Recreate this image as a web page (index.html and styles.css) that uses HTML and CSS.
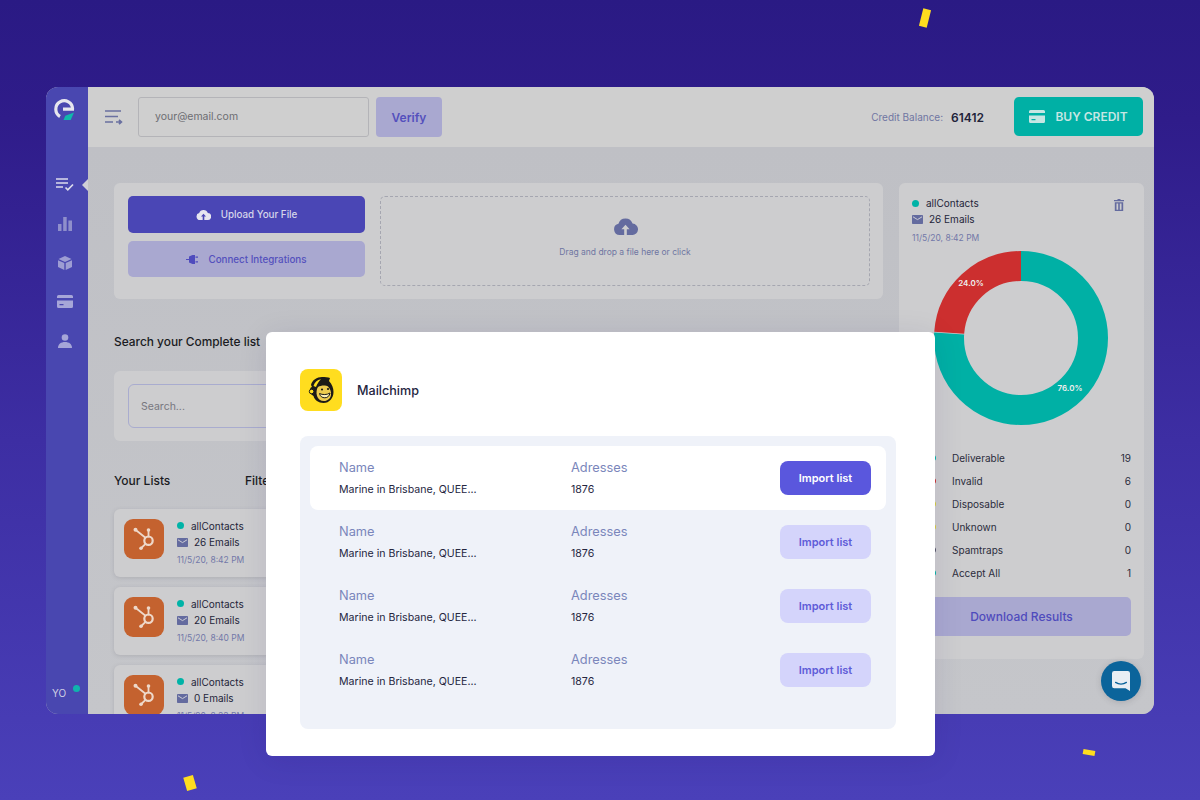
FILE: index.html
```html
<!DOCTYPE html>
<html lang="en">
<head>
  <meta charset="UTF-8" />
  <meta name="viewport" content="width=device-width, initial-scale=1.0" />
  <title>Email Verifier - Import list</title>
  <link rel="stylesheet" href="styles.css">
</head>
<body>
  <svg class="defs" width="0" height="0">
    <symbol id="i-mail" viewBox="0 0 11 9">
      <rect width="11" height="9" rx="0.8" fill="#646b9f"/>
      <path d="M1 1.8l4.5 2.8L10 1.8" fill="none" stroke="#cdcdd6" stroke-width="1"/>
    </symbol>
    <symbol id="i-hub" viewBox="0 0 40 40">
      <g fill="none" stroke="#eed8c9" stroke-width="1.8" stroke-linecap="round">
        <circle cx="24.5" cy="21.7" r="4.2" stroke-width="2.2"/>
        <path d="M24.5 17.5V11.5M21.5 18.8L11.8 11M21.5 24.8L17.3 29"/>
      </g>
      <g fill="#eed8c9">
        <circle cx="24.5" cy="11" r="1.8"/>
        <circle cx="11.5" cy="10.7" r="2"/>
        <circle cx="17" cy="29.2" r="1.8"/>
      </g>
    </symbol>
    <symbol id="i-card" viewBox="0 0 16 13">
      <path d="M1.5 0h13A1.5 1.5 0 0 1 16 1.5V3H0V1.500A1.500 1.500 0 0 1 1.500 0zM0 5.500h16v6A1.500 1.500 0 0 1 14.500 13h-13A1.500 1.500 0 0 1 0 11.500zM2.500 9v1.300h4V9z" fill="currentColor" fill-rule="evenodd"/>
    </symbol>
  </svg>

  <div class="confetti confetti-a"></div>
  <div class="confetti confetti-b"></div>
  <div class="confetti confetti-c"></div>

  <div class="app">
    <div class="sidebar">
      <svg class="logo" width="21" height="22" viewBox="0 0 21 22">
        <path d="M9 10.200H20M18.600 10.200A8.400 8.400 0 1 0 6 17.500" fill="none" stroke="#e6e6ee" stroke-width="3.200"/>
        <path d="M9.500 21l1.800-4.300 8.700-3.200-3.300 7.500z" fill="#10b8ab"/>
      </svg>
      <div class="side-item side-active">
        <svg width="18" height="13" viewBox="0 0 18 13"><path d="M0 1h12M0 5h12M0 9h7M9.500 9.500l2.300 2.300L17 6.500" fill="none" stroke="#dcdcec" stroke-width="1.700"/></svg>
      </div>
      <div class="side-item">
        <svg width="14" height="14" viewBox="0 0 14 14"><path d="M0 7h3.500v7H0zM5.200 0h3.500v14H5.200zM10.400 3.500H14V14h-3.600z" fill="#8f8fcb"/></svg>
      </div>
      <div class="side-item">
        <svg width="14" height="14" viewBox="0 0 14 14"><path d="M7 0l6.500 3L7 6 .5 3zM0 4.200l6.300 2.900V14L0 11zM14 4.200L7.700 7.100V14l6.300-3z" fill="#9d9dd3"/></svg>
      </div>
      <div class="side-item side-card"><svg width="16" height="13"><use href="#i-card"/></svg></div>
      <div class="side-item">
        <svg width="14" height="14" viewBox="0 0 14 14"><circle cx="7" cy="3.500" r="3.300" fill="#a6a6d8"/><path d="M0 14c0-4 3-6 7-6s7 2 7 6z" fill="#a6a6d8"/></svg>
      </div>
      <div class="side-user"><span>YO</span><i class="side-dot"></i></div>
    </div>

    <div class="content">
      <div class="topbar">
        <svg class="top-menu" width="18" height="15" viewBox="0 0 18 15"><path d="M0 1h16M0 6.500h13M0 12h8M11 12h5M14 9.800l2.400 2.200-2.400 2.200" fill="none" stroke="#6a70a0" stroke-width="1.700"/></svg>
        <div class="top-input">your@email.com</div>
        <button class="btn-verify">Verify</button>
        <div class="credit">
          <span class="credit-label">Credit Balance:</span>
          <span class="credit-value">61412</span>
        </div>
        <button class="btn-buy"><svg width="16" height="13"><use href="#i-card"/></svg>BUY CREDIT</button>
      </div>

      <div class="main">
        <div class="left-col">
          <div class="panel upload-panel">
            <div class="upload-btns">
              <button class="btn-upload">
                <svg width="15" height="11" viewBox="0 0 15 11"><path d="M4 11a3.500 3.500 0 0 1-.8-6.900A4.500 4.500 0 0 1 11.800 4 3.500 3.500 0 0 1 11.500 11H8.300V7.500h1.700L7.500 4.700 5 7.500h1.700V11z" fill="#e6e6f0"/></svg>
                Upload Your File
              </button>
              <button class="btn-connect">
                <svg width="12" height="11" viewBox="0 0 12 11"><path d="M0 5h3V2.500L6.500 1h2.500v9H6.500L3 8.500V6H0zM9.500 2.500H12v1.200H9.500zM9.500 7.300H12v1.200H9.500z" fill="#4f4bbd"/></svg>
                Connect Integrations
              </button>
            </div>
            <div class="dropzone">
              <svg width="25" height="18" viewBox="0 0 15 11"><path d="M4 11a3.500 3.500 0 0 1-.8-6.900A4.500 4.500 0 0 1 11.800 4 3.500 3.500 0 0 1 11.500 11H8.300V7.500h1.700L7.500 4.700 5 7.500h1.700V11z" fill="#646b9f"/></svg>
              <span>Drag and drop a file here or click</span>
            </div>
          </div>

          <h3 class="search-title">Search your Complete list</h3>
          <div class="panel search-panel">
            <div class="search-input">Search...</div>
          </div>

          <div class="lists-head">
            <span class="lists-title">Your Lists</span>
            <span class="lists-filter">Filter</span>
          </div>

          <div class="list-card">
            <svg class="hub" width="40" height="40"><use href="#i-hub"/></svg>
            <div class="list-info">
              <div class="list-name"><i class="dot-teal"></i>allContacts</div>
              <div class="list-mails"><svg width="11" height="9"><use href="#i-mail"/></svg>26 Emails</div>
              <div class="list-date">11/5/20, 8:42 PM</div>
            </div>
          </div>
          <div class="list-card">
            <svg class="hub" width="40" height="40"><use href="#i-hub"/></svg>
            <div class="list-info">
              <div class="list-name"><i class="dot-teal"></i>allContacts</div>
              <div class="list-mails"><svg width="11" height="9"><use href="#i-mail"/></svg>20 Emails</div>
              <div class="list-date">11/5/20, 8:40 PM</div>
            </div>
          </div>
          <div class="list-card">
            <svg class="hub" width="40" height="40"><use href="#i-hub"/></svg>
            <div class="list-info">
              <div class="list-name"><i class="dot-teal"></i>allContacts</div>
              <div class="list-mails"><svg width="11" height="9"><use href="#i-mail"/></svg>0 Emails</div>
              <div class="list-date">11/5/20, 8:33 PM</div>
            </div>
          </div>
        </div>

        <div class="panel result-panel">
          <div class="result-head">
            <div class="list-info">
              <div class="list-name"><i class="dot-teal"></i>allContacts</div>
              <div class="list-mails"><svg width="11" height="9"><use href="#i-mail"/></svg>26 Emails</div>
              <div class="list-date">11/5/20, 8:42 PM</div>
            </div>
            <svg class="trash" width="10" height="12" viewBox="0 0 10 12"><path d="M3.500 0h3v1H10v1.300H0V1h3.500zM.8 3.200h8.400V12H.8zM2.500 4.500V10.700h1.700V4.500zM5.800 4.500V10.700h1.700V4.500z" fill="#646b9f" fill-rule="evenodd"/></svg>
          </div>

          <svg class="donut" width="176" height="176" viewBox="0 0 176 176">
            <g fill="none" stroke-width="30" transform="rotate(-90 88 88)">
              <circle cx="88" cy="88" r="72" stroke="#00b0a5" stroke-dasharray="343.300 452.390"/>
              <circle cx="88" cy="88" r="72" stroke="#cc2f2f" stroke-dasharray="108 452.390" stroke-dashoffset="-344.100"/>
            </g>
            <text class="donut-label" x="38" y="36">24.0%</text>
            <text class="donut-label" x="137" y="141">76.0%</text>
          </svg>

          <div class="legend">
            <div class="legend-row"><i class="dot dot-1"></i><span>Deliverable</span><b>19</b></div>
            <div class="legend-row"><i class="dot dot-2"></i><span>Invalid</span><b>6</b></div>
            <div class="legend-row"><i class="dot dot-3"></i><span>Disposable</span><b>0</b></div>
            <div class="legend-row"><i class="dot dot-3"></i><span>Unknown</span><b>0</b></div>
            <div class="legend-row"><i class="dot dot-4"></i><span>Spamtraps</span><b>0</b></div>
            <div class="legend-row"><i class="dot dot-1"></i><span>Accept All</span><b>1</b></div>
          </div>
          <button class="btn-download">Download Results</button>
        </div>
      </div>
    </div>

    <div class="chat">
      <svg width="18" height="20" viewBox="0 0 20 22"><path d="M2.500 0h15A2.500 2.500 0 0 1 20 2.500V22l-5-3H2.500A2.500 2.500 0 0 1 0 16.500v-14A2.500 2.500 0 0 1 2.500 0z" fill="#e8eef4"/><path d="M4 12.500c3.500 2.500 8.500 2.500 12 0" fill="none" stroke="#0b649b" stroke-width="1.500" stroke-linecap="round"/></svg>
    </div>
  </div>

  <div class="modal">
    <div class="modal-head">
      <div class="mc-logo">
        <svg width="26" height="28" viewBox="0 0 26 28">
          <path d="M3 9C4 4 9 1 14 1c3 0 6 0 8 1l-1 3c3 3 4.500 7 4.500 11 0 6-4 11-10 11-5 0-9-3-10-7-2-1-4-3-3.500-6C2 12 3 11 4 11z" fill="#1c1a17"/>
          <path d="M5.500 10C6.500 6.500 9 4 13 3.300c-2 2-4 4.500-5 7.700z" fill="#ffdd1f"/>
          <path d="M10 11c3-2 8-2 10-.5 2 2 3.500 5 3 8.500-.5 3.500-3.500 6-7 6-3.500 0-6-2-7-5-1-3-.5-7 1-9z" fill="#eecb4e"/>
          <circle cx="3.600" cy="15.500" r="2.300" fill="#ffdd1f" stroke="#1c1a17"/>
          <circle cx="14" cy="13.500" r="1.100" fill="#1c1a17"/>
          <circle cx="20" cy="13" r="1.100" fill="#1c1a17"/>
          <path d="M11.500 17.500c3 1.500 7.500 1.500 10.500-.5-.5 3-2.500 4.800-5.200 4.800s-4.700-1.500-5.300-4.300z" fill="#fff1b8" stroke="#1c1a17" stroke-width="1"/>
        </svg>
      </div>
      <span class="mc-name">Mailchimp</span>
    </div>
    <div class="import-list">
      <div class="import-row import-row-active">
        <div class="import-name"><span class="import-label">Name</span><span class="import-value">Marine in Brisbane, QUEE...</span></div>
        <div class="import-addr"><span class="import-label">Adresses</span><span class="import-value">1876</span></div>
        <button class="btn-import btn-import-active">Import list</button>
      </div>
      <div class="import-row">
        <div class="import-name"><span class="import-label">Name</span><span class="import-value">Marine in Brisbane, QUEE...</span></div>
        <div class="import-addr"><span class="import-label">Adresses</span><span class="import-value">1876</span></div>
        <button class="btn-import">Import list</button>
      </div>
      <div class="import-row">
        <div class="import-name"><span class="import-label">Name</span><span class="import-value">Marine in Brisbane, QUEE...</span></div>
        <div class="import-addr"><span class="import-label">Adresses</span><span class="import-value">1876</span></div>
        <button class="btn-import">Import list</button>
      </div>
      <div class="import-row">
        <div class="import-name"><span class="import-label">Name</span><span class="import-value">Marine in Brisbane, QUEE...</span></div>
        <div class="import-addr"><span class="import-label">Adresses</span><span class="import-value">1876</span></div>
        <button class="btn-import">Import list</button>
      </div>
    </div>
  </div>
</body>
</html>
```

FILE: styles.css
```css
* {
  box-sizing: border-box;
}

body {
  margin: 0;
  height: 800px;
  padding: 87px 46px 0;
  overflow: hidden;
  position: relative;
  font-family: Inter, 'Noto Sans', sans-serif;
  color: #1f2030;
  background: linear-gradient(to bottom, #2a1a84 0%, #2f1c8a 15%, #3d2ea3 55%, #4a40b9 100%);
}

button {
  font-family: inherit;
  border: none;
  cursor: pointer;
}

.defs {
  position: absolute;
}

.confetti {
  position: absolute;
  background: #ffdd1f;
}

.confetti-a {
  left: 921px;
  top: 9px;
  width: 8px;
  height: 18px;
  transform: rotate(14deg);
}

.confetti-b {
  left: 185px;
  top: 776px;
  width: 10px;
  height: 14px;
  transform: rotate(-16deg);
}

.confetti-c {
  left: 1083px;
  top: 750px;
  width: 12px;
  height: 5px;
  transform: rotate(10deg);
}

.app {
  position: relative;
  display: flex;
  height: 627px;
  border-radius: 12px;
  overflow: hidden;
  background: #c2c3c8;
}

.sidebar {
  width: 42px;
  flex-shrink: 0;
  display: flex;
  flex-direction: column;
  align-items: center;
  background: #4947b0;
  padding-top: 12px;
  position: relative;
}

.logo {
  margin: 0 5px 55px 0;
}

.side-item {
  position: relative;
  height: 39px;
  width: 100%;
  display: flex;
  justify-content: center;
  padding: 2px 5px 0 0;
}

.side-card {
  color: #a6a6d8;
}

.side-active::after {
  content: "";
  position: absolute;
  right: 0;
  top: 3px;
  border: 6px solid transparent;
  border-right-color: #cfcfd6;
  border-left-width: 0;
}

.side-user {
  position: absolute;
  left: 6px;
  bottom: 15px;
  font-size: 10px;
  color: #cfcfe4;
  display: flex;
  align-items: flex-start;
  gap: 7px;
}

.side-dot {
  width: 7px;
  height: 7px;
  border-radius: 50%;
  background: #10b3ad;
  margin-top: -2px;
}

.content {
  flex: 1;
  min-width: 0;
  display: flex;
  flex-direction: column;
}

.topbar {
  height: 60px;
  flex-shrink: 0;
  display: flex;
  align-items: center;
  background: #cfcfcf;
  padding: 0 11px 0 17px;
}

.top-menu {
  margin-right: 15px;
}

.top-input {
  width: 231px;
  height: 40px;
  border: 1px solid #b4b4b8;
  border-radius: 3px;
  padding-left: 16px;
  line-height: 38px;
  font-size: 10.500px;
  color: #6d6d72;
}

.btn-verify {
  margin-left: 7px;
  width: 66px;
  height: 40px;
  border-radius: 4px;
  background: #a9a8d0;
  color: #5450bd;
  font-size: 12px;
  font-weight: 600;
}

.credit {
  margin-left: auto;
  margin-right: 30px;
  display: flex;
  align-items: center;
  gap: 8px;
}

.credit-label {
  font-size: 10px;
  color: #6f76a2;
}

.credit-value {
  font-size: 12px;
  font-weight: 600;
  color: #22233a;
}

.btn-buy {
  width: 129px;
  height: 39px;
  margin-bottom: 2px;
  border-radius: 5px;
  background: #00b0a5;
  color: #c6e6e3;
  font-size: 12px;
  font-weight: 600;
  display: flex;
  align-items: center;
  justify-content: center;
  gap: 10px;
}

.main {
  flex: 1;
  min-height: 0;
  display: flex;
  align-items: flex-start;
  gap: 16px;
  padding: 36px 10px 0 26px;
  overflow: hidden;
  background: linear-gradient(to bottom, #bfc0c5, #c5c6ca);
}

.left-col {
  width: 769px;
  flex-shrink: 0;
}

.panel {
  background: #cdcdcf;
  border-radius: 6px;
}

.upload-panel {
  height: 116px;
  display: flex;
  gap: 15px;
  padding: 13px 13px 13px 14px;
}

.upload-btns {
  width: 237px;
  flex-shrink: 0;
  display: flex;
  flex-direction: column;
  gap: 8px;
}

.btn-upload,
.btn-connect {
  height: 37px;
  border-radius: 5px;
  font-size: 9.800px;
  font-weight: 500;
  display: flex;
  align-items: center;
  justify-content: center;
  gap: 10px;
}

.btn-upload {
  background: #4a46b5;
  color: #d6d6ea;
}

.btn-connect {
  height: 36px;
  background: #a9a8d0;
  color: #5450bd;
}

.dropzone {
  width: 490px;
  height: 90px;
  border: 1px dashed #a5a6b0;
  border-radius: 5px;
  padding-bottom: 9px;
  display: flex;
  flex-direction: column;
  align-items: center;
  justify-content: center;
  gap: 12px;
  font-size: 8.500px;
  color: #6f76a2;
}

.search-title {
  margin: 35px 0 21px;
  font-size: 11.900px;
  line-height: 16px;
  font-weight: 500;
  color: #1a1b22;
}

.search-panel {
  height: 70px;
  padding: 13px 14px;
}

.search-input {
  height: 44px;
  border: 1px solid #a9accf;
  border-radius: 6px;
  padding-left: 12px;
  line-height: 43px;
  font-size: 10.500px;
  color: #77777f;
}

.lists-head {
  margin: 32px 0 20px;
  display: flex;
  line-height: 16px;
  font-size: 12px;
  font-weight: 500;
  color: #1a1b22;
}

.lists-title {
  width: 131px;
}

.list-card {
  height: 68px;
  margin-bottom: 10px;
  padding: 10px;
  display: flex;
  gap: 13px;
  background: #cdcdcf;
  border-radius: 6px;
  box-shadow: 0 1px 4px rgba(80, 80, 90, 0.18);
}

.hub {
  flex-shrink: 0;
  background: #c4622f;
  border-radius: 9px;
}

.list-info {
  display: flex;
  flex-direction: column;
  font-size: 10px;
  color: #24253a;
}

.list-name {
  display: flex;
  align-items: center;
  height: 14px;
}

.dot-teal {
  width: 7px;
  height: 7px;
  border-radius: 50%;
  background: #00b3a7;
  margin-right: 7px;
}

.list-mails {
  display: flex;
  align-items: center;
  height: 16px;
  margin-top: 2px;
  gap: 6px;
}

.list-date {
  margin-top: 3px;
  font-size: 8.500px;
  line-height: 14px;
  color: #7278a8;
}

.result-panel {
  width: 245px;
  height: 476px;
  padding: 13px;
  display: flex;
  flex-direction: column;
}

.result-head {
  height: 54px;
  display: flex;
  justify-content: space-between;
}

.result-head .list-mails {
  margin-top: 1px;
}

.result-head .list-date {
  margin-top: 4px;
}

.trash {
  margin: 3px 7px 0 0;
}

.donut {
  display: block;
  align-self: center;
  margin-left: -1px;
}

.donut-label {
  font-family: Inter, sans-serif;
  font-size: 8px;
  font-weight: 600;
  fill: #eeeeee;
  text-anchor: middle;
}

.legend {
  margin-top: 20px;
  padding-left: 18px;
}

.legend-row {
  height: 23px;
  display: flex;
  align-items: center;
  font-size: 10px;
  color: #2b2c3c;
}

.legend-row span {
  margin-left: 16px;
}

.legend-row b {
  margin-left: auto;
  font-weight: 400;
}

.dot {
  width: 6px;
  height: 6px;
  border-radius: 50%;
}

.dot-1 {
  background: #00b3a7;
}

.dot-2 {
  background: #cc2f2f;
}

.dot-3 {
  background: #d8cf3a;
}

.dot-4 {
  background: #55566a;
}

.btn-download {
  margin-top: 13px;
  height: 39px;
  flex-shrink: 0;
  border-radius: 5px;
  background: #a9a8d0;
  color: #4f4bbd;
  font-size: 12px;
  font-weight: 500;
}

.chat {
  position: absolute;
  right: 13px;
  bottom: 13px;
  width: 40px;
  height: 40px;
  border-radius: 50%;
  background: #0b649b;
  display: flex;
  align-items: center;
  justify-content: center;
  box-shadow: 0 1px 6px rgba(60, 60, 70, 0.2);
}

.modal {
  position: absolute;
  left: 266px;
  top: 332px;
  width: 669px;
  height: 424px;
  padding: 37px 39px 27px 34px;
  background: #fff;
  border-radius: 6px;
  box-shadow: 0 4px 30px rgba(30, 20, 90, 0.1);
}

.modal-head {
  display: flex;
  align-items: center;
  gap: 15px;
}

.mc-logo {
  width: 42px;
  height: 42px;
  border-radius: 8px;
  background: #ffdd1f;
  display: flex;
  align-items: center;
  justify-content: center;
}

.mc-name {
  font-size: 12.600px;
  font-weight: 500;
  color: #25263f;
}

.import-list {
  margin-top: 25px;
  height: 293px;
  padding: 10px 10px 0 10px;
  background: #eff2f9;
  border-radius: 8px;
}

.import-row {
  height: 64px;
  display: flex;
  align-items: center;
  padding: 0 15px 0 29px;
  border-radius: 8px;
}

.import-row-active {
  background: #fff;
}

.import-name {
  width: 232px;
}

.import-addr {
  flex: 1;
}

.import-name,
.import-addr {
  display: flex;
  flex-direction: column;
  gap: 8px;
  padding-top: 1px;
}

.import-label {
  font-size: 12.800px;
  line-height: 15px;
  color: #7a86bb;
}

.import-value {
  font-size: 10.600px;
  line-height: 14px;
  font-weight: 400;
  color: #25263f;
}

.btn-import {
  width: 91px;
  height: 34px;
  border-radius: 8px;
  background: #d4d4fb;
  color: #5f5cd8;
  font-size: 11px;
  font-weight: 600;
}

.btn-import-active {
  background: #5a57dd;
  color: #fff;
}
```
